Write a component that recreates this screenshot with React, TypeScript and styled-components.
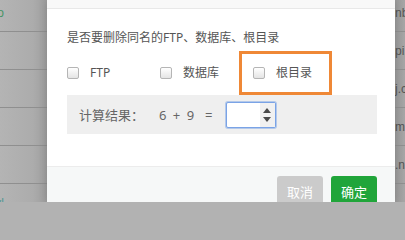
import styled, { createGlobalStyle } from "styled-components";

const GlobalStyle = createGlobalStyle`
    html, body {
        margin: 0;
        padding: 0;
        background: #b2b2b2;
    }
    body {
        font-family: "Noto Sans", "Noto Sans CJK SC", sans-serif;
    }
`;

const leftRows = [
    { text: "www.demo", color: "#1f8a4c" },
    { text: "", color: "#333" },
    { text: "", color: "#333" },
    { text: "", color: "#333" },
    { text: "", color: "#333" },
    { text: "vl", color: "#2f8f8a" },
];

const rightRows = ["nb", "pi.", "j.c", "m", ".n", "..."];

const App = () => {
    return (
        <>
            <GlobalStyle />
            <Screen>
                <Backdrop $width={47} $shade="left">
                    <RowList>
                        {leftRows.map((row, index) => (
                            <PageRow key={index} $align="end">
                                <RowText $color={row.color} $offset={43}>
                                    {row.text}
                                </RowText>
                            </PageRow>
                        ))}
                    </RowList>
                </Backdrop>

                <Dialog>
                    <DialogHeader />
                    <DialogBody>
                        <Question>是否要删除同名的FTP、数据库、根目录</Question>
                        <CheckRow>
                            <CheckItem>
                                <CheckBox />
                                <CheckLabel>FTP</CheckLabel>
                            </CheckItem>
                            <CheckItem>
                                <CheckBox />
                                <CheckLabel>数据库</CheckLabel>
                            </CheckItem>
                            <CheckItem>
                                <CheckBox />
                                <CheckLabel>根目录</CheckLabel>
                                <Highlight />
                            </CheckItem>
                        </CheckRow>
                        <CalcBox>
                            <CalcLabel>计算结果：</CalcLabel>
                            <CalcFormula>6 + 9</CalcFormula>
                            <CalcEquals>=</CalcEquals>
                            <NumberField>
                                <NumberInput type="text" defaultValue="" />
                                <Spinner>
                                    <SpinArrow $dir="up" />
                                    <SpinArrow $dir="down" />
                                </Spinner>
                            </NumberField>
                        </CalcBox>
                    </DialogBody>
                    <DialogFooter>
                        <FooterButton $variant="cancel">取消</FooterButton>
                        <FooterButton $variant="confirm">确定</FooterButton>
                    </DialogFooter>
                </Dialog>

                <Backdrop $width={10} $shade="right">
                    <RowList>
                        {rightRows.map((text, index) => (
                            <PageRow key={index} $align="start">
                                <RowText $color="#3a3a3a" $offset={0}>
                                    {text}
                                </RowText>
                            </PageRow>
                        ))}
                    </RowList>
                </Backdrop>
            </Screen>
        </>
    );
};

const Screen = styled.div`
    display: flex;
    width: 405px;
    height: 202px;
    overflow: hidden;
`;

const Backdrop = styled.div<{ $width: number; $shade: "left" | "right" }>`
    flex: 0 0 ${(p) => p.$width}px;
    height: 100%;
    overflow: hidden;
    background: ${(p) =>
        p.$shade === "left"
            ? "linear-gradient(to right, #b4b4b4 0%, #acacac 70%, #9d9d9d 100%)"
            : "linear-gradient(to right, #999999 0%, #a6a6a6 100%)"};
`;

const RowList = styled.div`
    display: flex;
    flex-direction: column;
    margin-top: -6px;
`;

const PageRow = styled.div<{ $align: "start" | "end" }>`
    display: flex;
    flex: none;
    align-items: center;
    justify-content: ${(p) => (p.$align === "end" ? "flex-end" : "flex-start")};
    height: 37px;
    border-bottom: 1px solid #8f8f8f;
    overflow: hidden;
    white-space: nowrap;
`;

const RowText = styled.span<{ $color: string; $offset: number }>`
    flex: none;
    margin-right: ${(p) => p.$offset}px;
    font-family: "Liberation Sans", sans-serif;
    font-size: 12px;
    color: ${(p) => p.$color};
    opacity: 0.75;
`;

const Dialog = styled.div`
    flex: 0 0 348px;
    display: flex;
    flex-direction: column;
    height: 100%;
    overflow: hidden;
    background: #ffffff;
    box-shadow: 0 0 8px rgba(0, 0, 0, 0.15);
    position: relative;
    z-index: 1;
`;

const DialogHeader = styled.div`
    flex: none;
    height: 8px;
    background: #f8f8f8;
    border-bottom: 1px solid #e8e8e8;
`;

const DialogBody = styled.div`
    flex: none;
    padding: 19px 18px 32px 20px;
    display: flex;
    flex-direction: column;
`;

const Question = styled.p`
    margin: 0;
    font-size: 12px;
    line-height: 20px;
    color: #555555;
`;

const CheckRow = styled.div`
    display: flex;
    align-items: center;
    height: 24px;
    margin-top: 13px;
    margin-bottom: 10px;
`;

const CheckItem = styled.label`
    position: relative;
    display: flex;
    align-items: center;
    width: 93px;
    height: 20px;
`;

const CheckBox = styled.span`
    width: 12px;
    height: 12px;
    box-sizing: border-box;
    border: 1px solid #b5b5b5;
    border-radius: 2px;
    background: linear-gradient(#ffffff, #e4e4e4);
`;

const CheckLabel = styled.span`
    margin-left: 11px;
    font-size: 12px;
    line-height: 20px;
    color: #555555;
`;

const Highlight = styled.span`
    position: absolute;
    left: -14px;
    top: -12px;
    width: 93px;
    height: 44px;
    box-sizing: border-box;
    border: 3px solid #ef8836;
    pointer-events: none;
`;

const CalcBox = styled.div`
    display: flex;
    align-items: center;
    width: 310px;
    height: 39px;
    box-sizing: border-box;
    padding-left: 12px;
    background: #efefef;
`;

const CalcLabel = styled.span`
    font-size: 13px;
    color: #666666;
`;

const CalcFormula = styled.span`
    margin-left: 15px;
    font-size: 13px;
    word-spacing: 3px;
    color: #666666;
`;

const CalcEquals = styled.span`
    margin-left: 11px;
    font-size: 13px;
    color: #666666;
`;

const NumberField = styled.div`
    display: flex;
    margin-left: 13px;
    width: 50px;
    height: 26px;
    box-sizing: border-box;
    border: 1px solid #7aa3e6;
    border-radius: 2px;
    box-shadow: 0 0 0 1px rgba(122, 163, 230, 0.5);
    background: #ffffff;
`;

const NumberInput = styled.input`
    flex: 1;
    min-width: 0;
    border: none;
    outline: none;
    padding: 0 4px;
    font-size: 13px;
    background: transparent;
`;

const Spinner = styled.div`
    display: flex;
    flex-direction: column;
    justify-content: space-around;
    align-items: center;
    width: 15px;
    padding: 3px 0;
    box-sizing: border-box;
    background: #f1f1f1;
`;

const SpinArrow = styled.span<{ $dir: "up" | "down" }>`
    width: 0;
    height: 0;
    border-left: 4px solid transparent;
    border-right: 4px solid transparent;
    ${(p) => (p.$dir === "up" ? "border-bottom: 5px solid #4a4a4a;" : "border-top: 5px solid #4a4a4a;")}
`;

const DialogFooter = styled.div`
    flex: 1;
    min-height: 0;
    display: flex;
    justify-content: flex-end;
    align-items: flex-start;
    gap: 8px;
    padding: 9px 18px 0 0;
    background: #f6f8f8;
    border-top: 1px solid #ececec;
`;

const FooterButton = styled.button<{ $variant: "cancel" | "confirm" }>`
    flex: none;
    width: 46px;
    height: 30px;
    padding: 0;
    border: none;
    border-radius: 3px;
    font-family: "Noto Sans CJK SC", sans-serif;
    font-size: 13px;
    color: #ffffff;
    background: ${(p) => (p.$variant === "confirm" ? "#20a53a" : "#cbcbcb")};
`;

export default App;
